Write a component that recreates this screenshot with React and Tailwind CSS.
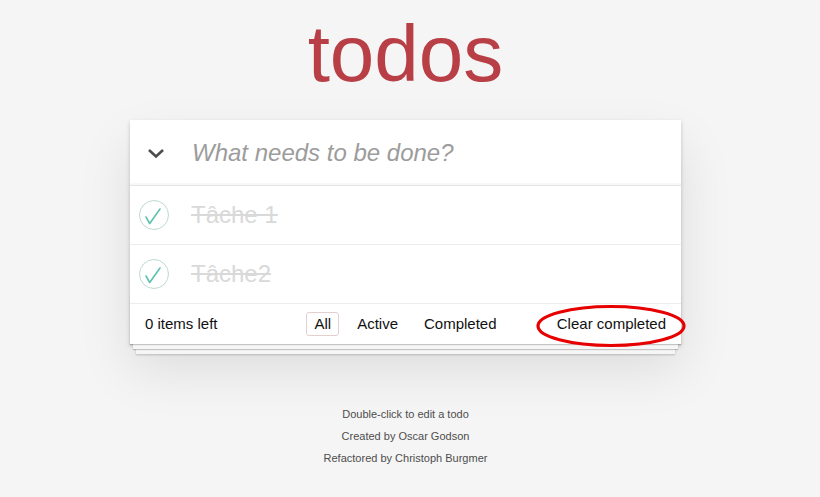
import React from "react";

function Check() {
  return (
    <svg width="30" height="30" viewBox="0 0 30 30" className="shrink-0">
      <circle cx="15" cy="15" r="14.5" fill="none" stroke="#bddad5" strokeWidth="1" />
      <polyline points="7,17 10.7,23.5 21,9" fill="none" stroke="#5dc2af" strokeWidth="1.6" strokeLinecap="round" strokeLinejoin="round" />
    </svg>
  );
}

function Item({ text }) {
  return (
    <div className="flex items-center h-[59px] border-b border-[#ededed] pl-[9px] gap-[22px]">
      <Check />
      <span className="text-[24px] leading-[1.2] text-[#d9d9d9] line-through">{text}</span>
    </div>
  );
}

export default function App() {
  return (
    <div
      className="min-h-[497px] w-full bg-[#f5f5f5] text-[#111111]"
      style={{ fontFamily: '"Liberation Sans", Arial, Helvetica, sans-serif' }}
    >
      <div className="ml-[130px] w-[551px] flex flex-col pt-[14px]">
        <h1 className="h-[80px] text-[80px] leading-[80px] text-center text-[#b83f45] font-normal mb-[26px]">
          todos
        </h1>

        <div className="bg-white shadow-[0_2px_4px_0_rgba(0,0,0,0.2),0_25px_50px_0_rgba(0,0,0,0.1)] flex flex-col">
          <div className="flex items-center h-[66px] border-b border-[#e6e6e6] shadow-[inset_0_-2px_1px_rgba(0,0,0,0.03)]">
            <div className="w-[50px] flex justify-center pl-[2px]">
              <svg width="18" height="12" viewBox="0 0 18 12">
                <polyline points="2,3 9,9.5 16,3" fill="none" stroke="#4d4d4d" strokeWidth="2.6" />
              </svg>
            </div>
            <span className="ml-[12px] text-[24px] italic text-[#9c9c9c] font-light">
              What needs to be done?
            </span>
          </div>

          <Item text="Tâche 1" />
          <Item text="Tâche2" />

          <div className="relative h-[40px] flex items-center px-[15px] text-[15px] text-[#111111]">
            <div className="absolute left-0 right-0 bottom-0 h-[50px] overflow-hidden pointer-events-none shadow-[0_1px_1px_rgba(0,0,0,0.2),0_8px_0_-3px_#f6f6f6,0_9px_1px_-3px_rgba(0,0,0,0.2),0_16px_0_-6px_#f6f6f6,0_17px_2px_-6px_rgba(0,0,0,0.2)]" />
            <span className="flex-1">0 items left</span>
            <div className="absolute left-0 right-0 top-0 bottom-0 flex items-center justify-center gap-[10px] pointer-events-none">
              <span className="border border-[#e4cfcf] rounded-[3px] px-[7px] py-[3px] leading-[16px]">All</span>
              <span className="border border-transparent px-[7px] py-[3px] leading-[16px]">Active</span>
              <span className="border border-transparent px-[7px] py-[3px] leading-[16px]">Completed</span>
            </div>
            <span className="relative">
              Clear completed
              <svg
                className="absolute left-[-21px] top-[-8px] overflow-visible"
                width="150"
                height="42"
                viewBox="0 0 150 42"
              >
                <ellipse cx="75" cy="21" rx="73" ry="19.5" fill="none" stroke="#e60000" strokeWidth="3.2" />
              </svg>
            </span>
          </div>
        </div>

        <div className="mt-[65px] flex flex-col items-center gap-[11px] text-[11px] leading-[11px] text-[#4d4d4d]">
          <p>Double-click to edit a todo</p>
          <p>Created by Oscar Godson</p>
          <p>Refactored by Christoph Burgmer</p>
        </div>
      </div>
    </div>
  );
}
